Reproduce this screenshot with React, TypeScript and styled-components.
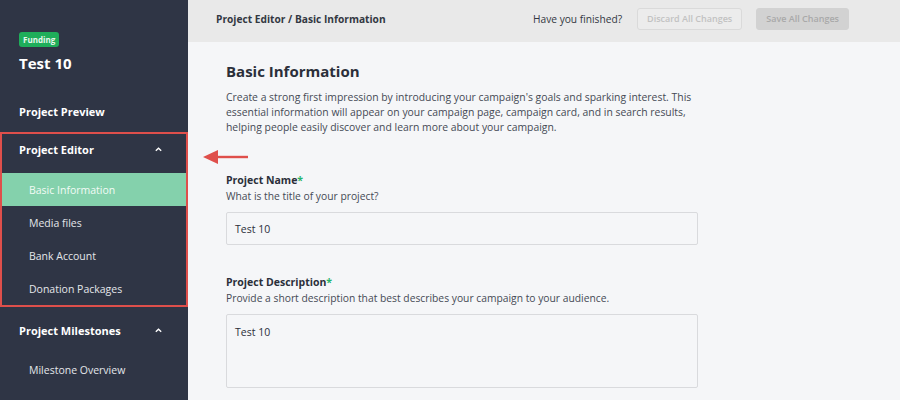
import React from "react";
import styled, { createGlobalStyle } from "styled-components";

const GlobalStyle = createGlobalStyle`
  html, body {
    margin: 0;
    padding: 0;
  }
  body {
    font-family: "Open Sans", "Liberation Sans", sans-serif;
    background: #f5f6f8;
  }
`;

const Page = styled.div`
  display: flex;
  width: 900px;
  height: 400px;
  overflow: hidden;
`;

const Sidebar = styled.aside`
  width: 188px;
  flex-shrink: 0;
  background: #2f3545;
  color: #ffffff;
  display: flex;
  flex-direction: column;
  padding-top: 32px;
`;

const Badge = styled.span`
  align-self: flex-start;
  margin-left: 19px;
  background: #1fae5a;
  color: #e8f7ee;
  font-size: 8px;
  font-weight: 700;
  padding: 2px 4px;
  border-radius: 3px;
  line-height: 11px;
`;

const ProjectTitle = styled.h2`
  margin: 6px 0 0 19px;
  font-size: 15px;
  font-weight: 700;
  line-height: 20px;
`;

const GroupTitle = styled.div<{ $h?: number }>`
  display: flex;
  align-items: center;
  justify-content: space-between;
  padding: 0 25px 0 19px;
  height: ${(p) => p.$h ?? 34}px;
  font-size: 11px;
  font-weight: 700;
`;

const PreviewLink = styled(GroupTitle)`
  margin-top: 21px;
  margin-bottom: 4px;
`;

const EditorGroup = styled.div`
  border: 2px solid #df4f4b;
  ${GroupTitle} {
    box-sizing: border-box;
    padding: 0 23px 8px 17px;
  }
`;

const Chevron = styled.svg`
  width: 9px;
  height: 9px;
`;

const SubItem = styled.div<{ $active?: boolean }>`
  display: flex;
  align-items: center;
  height: 33px;
  padding-left: 27px;
  font-size: 10.5px;
  color: ${(p) => (p.$active ? "#f2fbf6" : "#e4e6ea")};
  background: ${(p) => (p.$active ? "#84d1ac" : "transparent")};
`;

const MilestoneGroup = styled.div`
  margin-top: 6px;
  ${SubItem} {
    padding-left: 29px;
    margin-top: 6px;
  }
`;

const Main = styled.main`
  flex: 1;
  display: flex;
  flex-direction: column;
  position: relative;
`;

const TopBar = styled.header`
  height: 42px;
  box-sizing: border-box;
  padding: 0 51px 5px 28px;
  background: #e9e9e9;
  display: flex;
  align-items: center;
  font-size: 10.2px;
  color: #333842;
`;

const Crumb = styled.div`
  font-weight: 700;
  flex: 1;
`;

const Question = styled.span`
  margin-right: 15px;
`;

const BarButton = styled.button<{ $filled?: boolean }>`
  font-family: inherit;
  font-size: 9px;
  font-weight: 600;
  height: 22px;
  padding: 0 9px;
  margin-left: ${(p) => (p.$filled ? "14px" : "0")};
  border-radius: 3px;
  border: 1px solid ${(p) => (p.$filled ? "#d2d2d2" : "#dadada")};
  background: ${(p) => (p.$filled ? "#d2d2d2" : "#ececec")};
  color: ${(p) => (p.$filled ? "#a9a9a9" : "#c2c2c2")};
`;

const Content = styled.section`
  padding: 18px 0 0 38px;
  width: 472px;
  color: #2b2f3a;
`;

const Heading = styled.h1`
  margin: 0;
  font-size: 15px;
  font-weight: 700;
  line-height: 22px;
`;

const Intro = styled.p`
  margin: 8px 0 0;
  font-size: 10.4px;
  line-height: 15px;
  color: #454a55;
`;

const Field = styled.div`
  margin-top: 38px;
  & + & {
    margin-top: 30px;
  }
`;

const Label = styled.div`
  font-size: 10.5px;
  font-weight: 700;
  line-height: 15px;
  color: #2b2f3a;
`;

const Star = styled.span`
  color: #28b46a;
`;

const Hint = styled.div`
  font-size: 10.3px;
  line-height: 15px;
  color: #454a55;
  margin-top: 1px;
`;

const Input = styled.div<{ $tall?: boolean }>`
  margin-top: 8px;
  height: ${(p) => (p.$tall ? "74px" : "33px")};
  box-sizing: border-box;
  border: 1px solid #d9dadd;
  border-radius: 2px;
  background: #f5f6f8;
  padding: ${(p) => (p.$tall ? "10px 8px" : "0 8px")};
  display: flex;
  align-items: ${(p) => (p.$tall ? "flex-start" : "center")};
  font-size: 10.5px;
  color: #2b2f3a;
`;

const Arrow = styled.svg`
  position: absolute;
  left: 15px;
  top: 149px;
`;

const Up = () => (
  <Chevron viewBox="0 0 10 10">
    <path d="M2 6.5 L5 3.5 L8 6.5" stroke="#ffffff" strokeWidth="1.5" fill="none" />
  </Chevron>
);

export default function App() {
  return (
    <Page>
      <GlobalStyle />
      <Sidebar>
        <Badge>Funding</Badge>
        <ProjectTitle>Test 10</ProjectTitle>
        <PreviewLink>Project Preview</PreviewLink>
        <EditorGroup>
          <GroupTitle $h={39}>
            Project Editor
            <Up />
          </GroupTitle>
          <SubItem $active>Basic Information</SubItem>
          <SubItem>Media files</SubItem>
          <SubItem>Bank Account</SubItem>
          <SubItem>Donation Packages</SubItem>
        </EditorGroup>
        <MilestoneGroup>
          <GroupTitle>
            Project Milestones
            <Up />
          </GroupTitle>
          <SubItem>Milestone Overview</SubItem>
        </MilestoneGroup>
      </Sidebar>
      <Main>
        <TopBar>
          <Crumb>Project Editor / Basic Information</Crumb>
          <Question>Have you finished?</Question>
          <BarButton>Discard All Changes</BarButton>
          <BarButton $filled>Save All Changes</BarButton>
        </TopBar>
        <Content>
          <Heading>Basic Information</Heading>
          <Intro>
            Create a strong first impression by introducing your campaign's goals and sparking
            interest. This essential information will appear on your campaign page, campaign card,
            and in search results, helping people easily discover and learn more about your
            campaign.
          </Intro>
          <Field>
            <Label>
              Project Name<Star>*</Star>
            </Label>
            <Hint>What is the title of your project?</Hint>
            <Input>Test 10</Input>
          </Field>
          <Field>
            <Label>
              Project Description<Star>*</Star>
            </Label>
            <Hint>Provide a short description that best describes your campaign to your audience.</Hint>
            <Input $tall>Test 10</Input>
          </Field>
        </Content>
        <Arrow width="46" height="16" viewBox="0 0 46 16">
          <path d="M14 6.8 H45 V9.2 H14 Z" fill="#df4f4b" />
          <path d="M0 8 L15 1 L15 15 Z" fill="#df4f4b" />
        </Arrow>
      </Main>
    </Page>
  );
}
